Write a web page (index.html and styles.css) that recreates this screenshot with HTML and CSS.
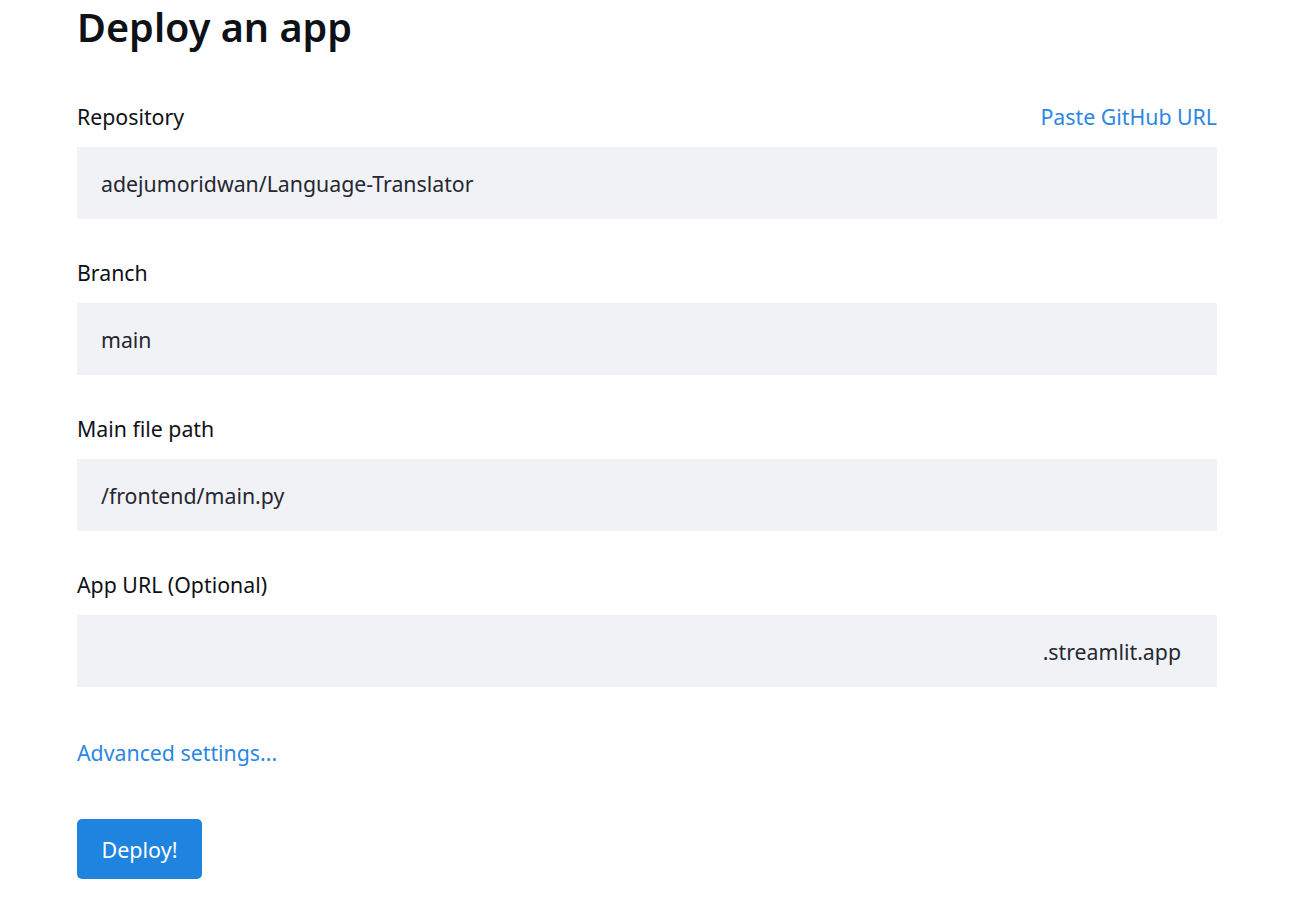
FILE: index.html
```html
<!DOCTYPE html>
<html>
<head>
<meta charset="utf-8">
<link rel="stylesheet" href="styles.css">
</head>
<body>
<main class="page">
  <h1 class="title">Deploy an app</h1>
  <div class="field">
    <div class="label-row">
      <span class="label">Repository</span>
      <a class="link" href="#">Paste GitHub URL</a>
    </div>
    <div class="input">adejumoridwan/Language-Translator</div>
  </div>
  <div class="field">
    <div class="label-row"><span class="label">Branch</span></div>
    <div class="input">main</div>
  </div>
  <div class="field">
    <div class="label-row"><span class="label">Main file path</span></div>
    <div class="input">/frontend/main.py</div>
  </div>
  <div class="field">
    <div class="label-row"><span class="label">App URL (Optional)</span></div>
    <div class="input input-url"><span class="suffix">.streamlit.app</span></div>
  </div>
  <div class="advanced"><a class="link" href="#">Advanced settings...</a></div>
  <button class="deploy">Deploy!</button>
</main>
</body>
</html>
```

FILE: styles.css
```css
html, body {
  margin: 0;
  padding: 0;
  background: #ffffff;
}
body {
  font-family: "Noto Sans", "Open Sans", sans-serif;
  color: #262730;
}
.page {
  width: 1140px;
  margin-left: 77px;
  display: flex;
  flex-direction: column;
}
.title {
  margin: 0 0 48px 0;
  font-size: 39.6px;
  line-height: 54px;
  font-weight: 600;
  color: #0e1117;
}
.field {
  display: flex;
  flex-direction: column;
  gap: 15px;
  margin-bottom: 39px;
}
.label-row {
  display: flex;
  justify-content: space-between;
  align-items: center;
  height: 30px;
  font-size: 21.3px;
  line-height: 30px;
}
.label {
  color: #0e1117;
}
.link {
  color: #2b87e3;
  text-decoration: none;
  font-size: 21.3px;
}
.input {
  height: 72px;
  background: #f0f2f6;
  display: flex;
  align-items: center;
  padding: 0 24px;
  font-size: 21.3px;
  color: #262730;
}
.input-url {
  justify-content: flex-end;
  padding-right: 36px;
}
.advanced {
  height: 30px;
  line-height: 30px;
  margin-top: 12px;
  margin-bottom: 51px;
}
.deploy {
  align-self: flex-start;
  width: 125px;
  height: 60px;
  border: none;
  border-radius: 5px;
  background: #1f83e0;
  color: #ffffff;
  font-family: inherit;
  font-size: 21.5px;
  padding: 0;
}
```
